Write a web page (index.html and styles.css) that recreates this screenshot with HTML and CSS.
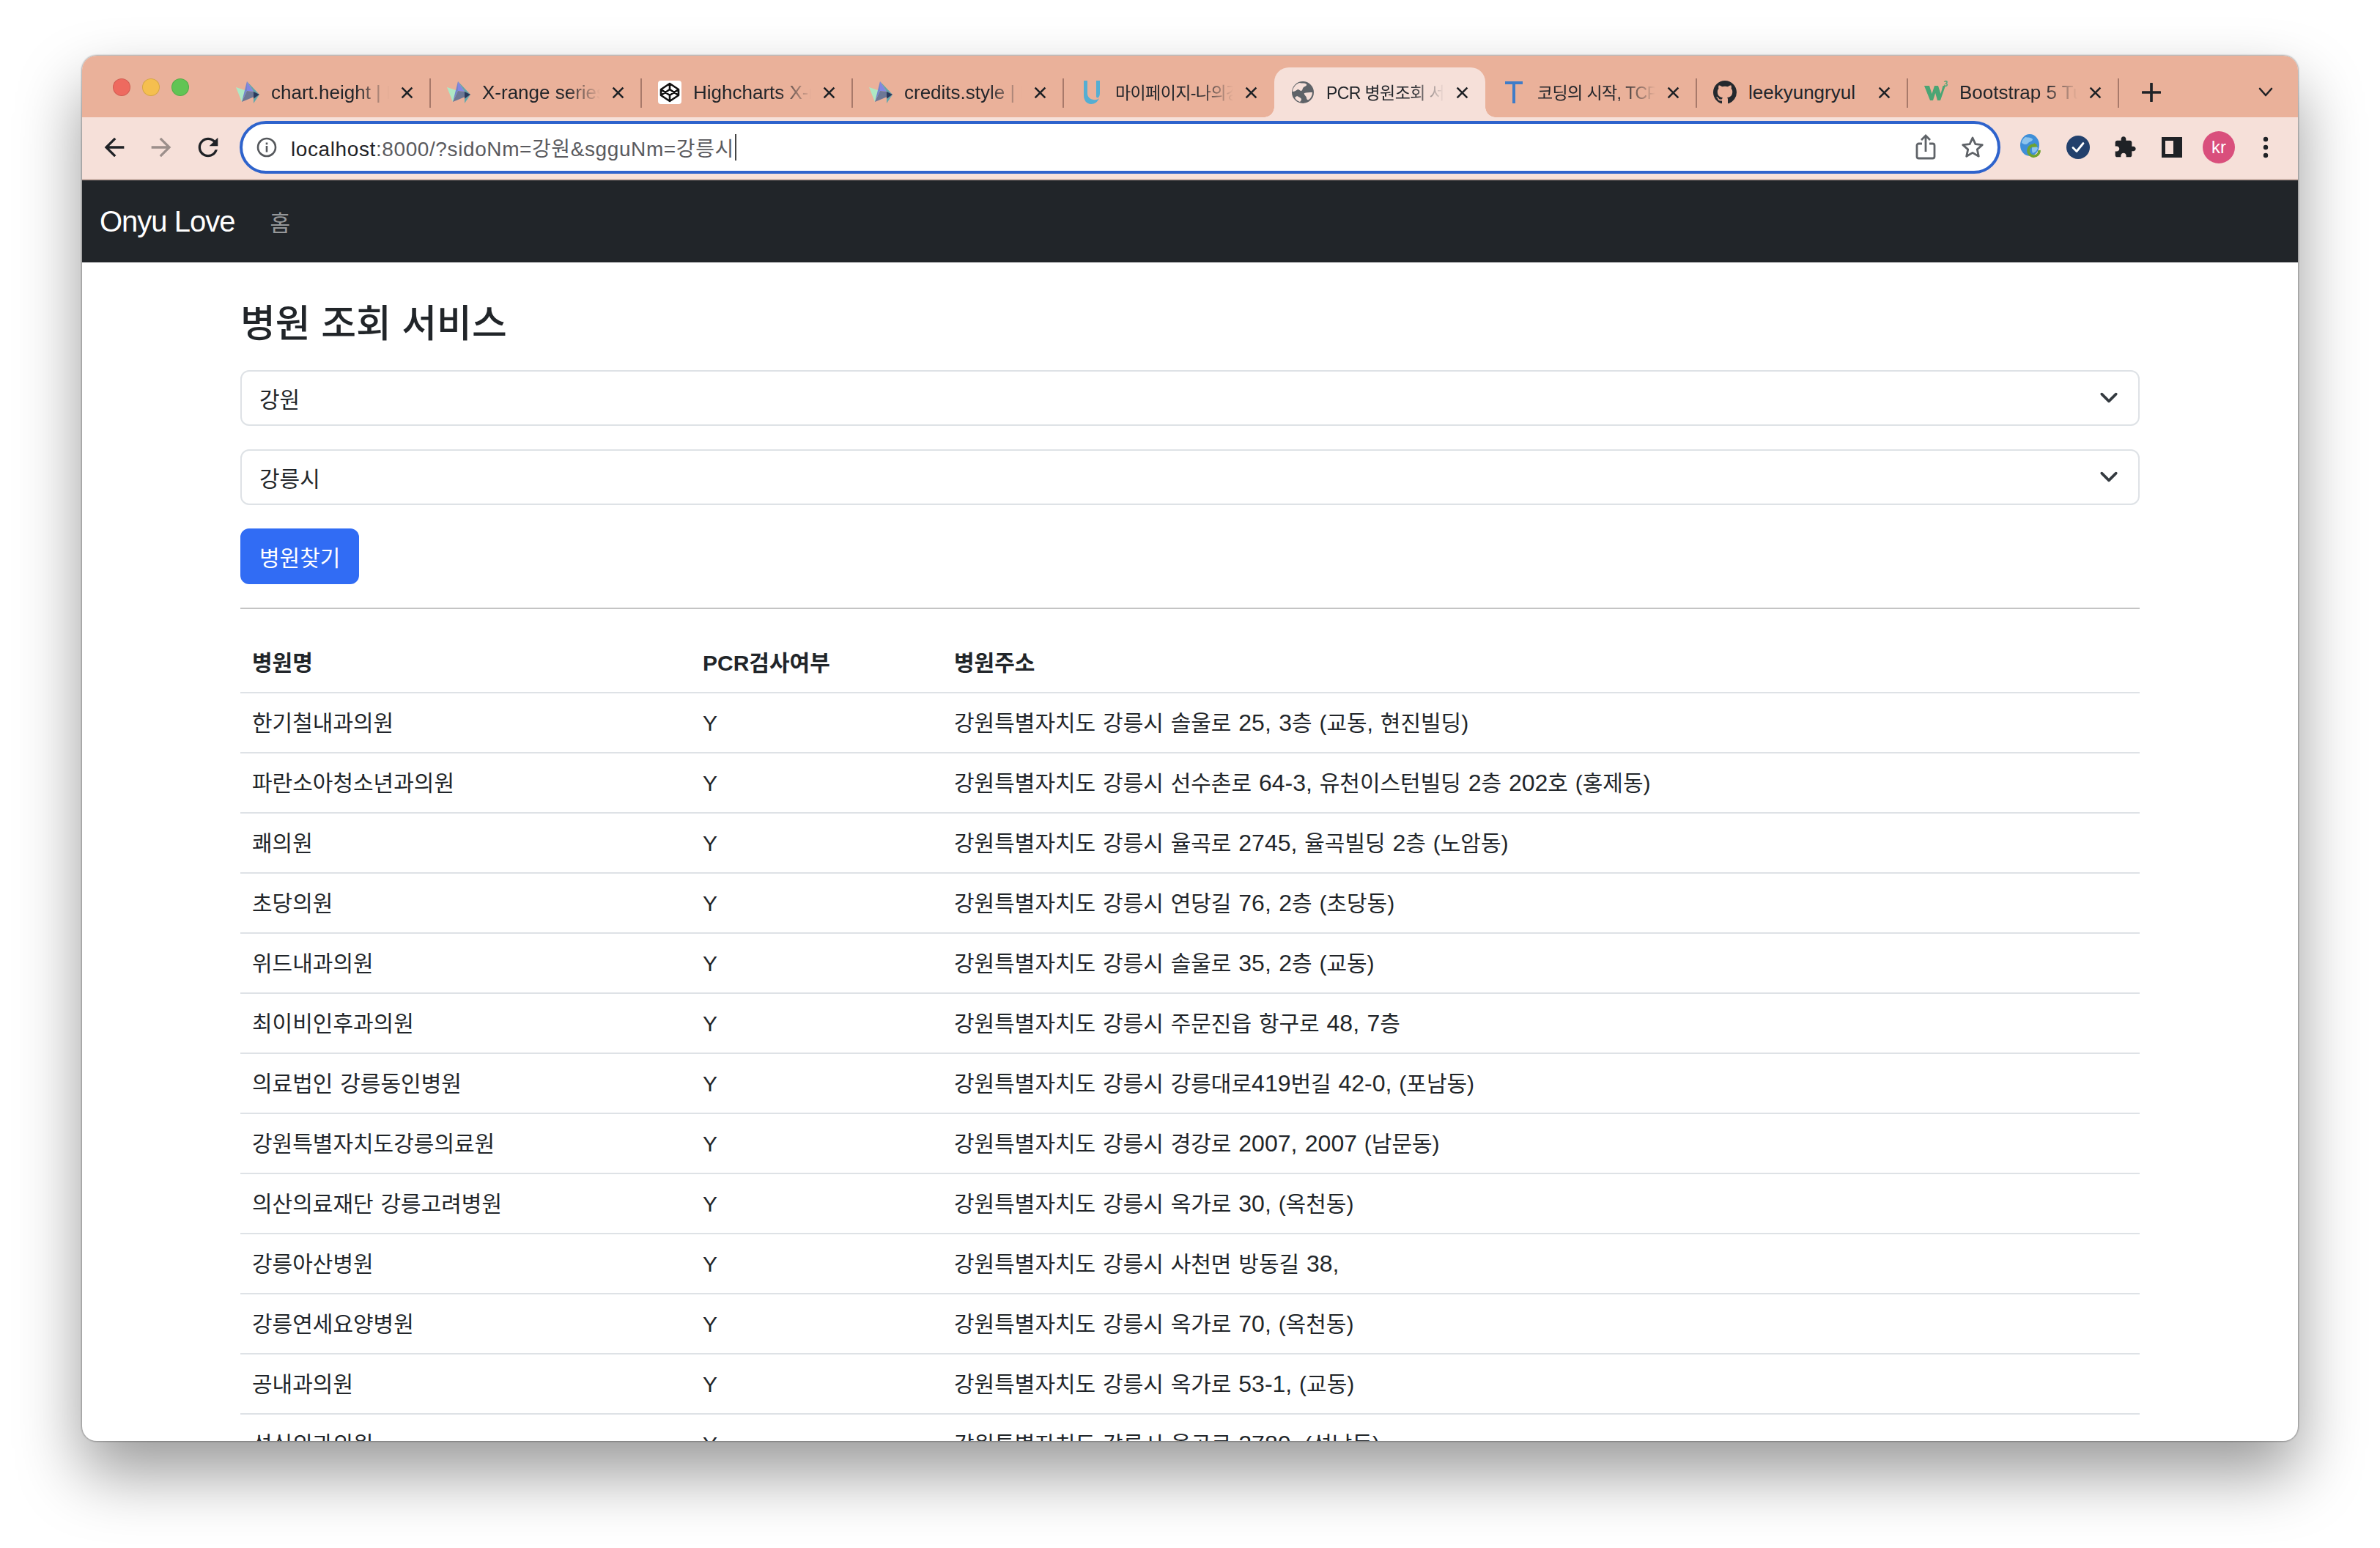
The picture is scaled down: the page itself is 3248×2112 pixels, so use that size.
FILE: index.html
```html
<!DOCTYPE html>
<html lang="ko">
<head>
<meta charset="utf-8">
<title>PCR 병원조회 서비스</title>
<link rel="stylesheet" href="styles.css">
</head>
<body>
<svg class="defs" width="0" height="0" aria-hidden="true">
  <defs>
    <symbol id="i-hc" viewBox="0 0 32 30">
      <polygon points="0,8 8,28 15,13" fill="#aee8c4"/>
      <polygon points="15,0 8,28 15,13" fill="#7585cc"/>
      <polygon points="15,0 24,14 15,13" fill="#8286e2"/>
      <polygon points="15,13 24,14 32,18 8,28" fill="#6d7896"/>
      <polygon points="15,0 32,18 24,14" fill="#62a4aa"/>
      <polygon points="24,14 32,18 24,24" fill="#2a3a5c"/>
      <polygon points="24,24 32,18 24,30" fill="#62a8ae"/>
    </symbol>
    <symbol id="i-x" viewBox="0 0 16 16">
      <path d="M1.5 1.5l13 13M14.5 1.5l-13 13" fill="none" stroke="#1f2226" stroke-width="2.4"/>
    </symbol>
    <symbol id="i-chev" viewBox="0 0 24 24">
      <path d="M3 7l9 9 9-9" fill="none" stroke="#343a40" stroke-width="3.4" stroke-linecap="round" stroke-linejoin="round"/>
    </symbol>
  </defs>
</svg>

<div class="window">
  <header class="strip">
    <div class="lights"><span class="dot dot-red"></span><span class="dot dot-yellow"></span><span class="dot dot-green"></span></div>
    <div class="tabs">
      <div class="tab">
        <svg class="fav"><use href="#i-hc"/></svg>
        <span class="title">chart.height | Highcharts</span>
        <svg class="close"><use href="#i-x"/></svg>
      </div>
      <div class="tab">
        <svg class="fav"><use href="#i-hc"/></svg>
        <span class="title">X-range series | Highcharts</span>
        <svg class="close"><use href="#i-x"/></svg>
      </div>
      <div class="tab">
        <svg class="fav" viewBox="0 0 32 32">
          <rect width="32" height="32" rx="4" fill="#fff"/>
          <path d="M16 4l12 8v8l-12 8-12-8v-8zM16 4v8M16 20v8M4 12l12 8 12-8M4 20l12-8 12 8" fill="none" stroke="#111" stroke-width="2.6" stroke-linejoin="round"/>
        </svg>
        <span class="title">Highcharts X-range</span>
        <svg class="close"><use href="#i-x"/></svg>
      </div>
      <div class="tab">
        <svg class="fav"><use href="#i-hc"/></svg>
        <span class="title">credits.style | Highcharts</span>
        <svg class="close"><use href="#i-x"/></svg>
      </div>
      <div class="tab tab-before-active">
        <svg class="fav" viewBox="0 0 32 32">
          <path d="M5 0h5v17c0 5 3 8 8 9 3 .6 6 0 8-2-2 5-6 8-11 8C9 32 5 27 5 20zM22 0h5v17c0 3-1 5-2 6-2 1-3 0-3-2z" fill="#55aed2"/>
        </svg>
        <span class="title ko">마이페이지-나의강의실</span>
        <svg class="close"><use href="#i-x"/></svg>
      </div>
      <div class="tab tab-active">
        <svg class="fav" viewBox="0 0 32 32">
          <circle cx="16" cy="16" r="15" fill="#5f6368"/>
          <path d="M11 3c3 1 8 0 10 2 1 2-2 3-4 4-2 2-1 4-3 5-2 0-3-2-5-2-2 1-4 3-7 3 0-5 4-10 9-12zM18 17c3-1 7-1 11-1 0 4-2 8-5 10-2 1-3-1-3-3-1-2-4-4-3-6zM8 21c2 1 5 2 6 4 0 2-1 3-2 4-3-1-6-3-7-6z" fill="#f6e0d9"/>
        </svg>
        <span class="title ko">PCR 병원조회 서비스</span>
        <svg class="close"><use href="#i-x"/></svg>
      </div>
      <div class="tab">
        <svg class="fav" viewBox="0 0 32 32">
          <path d="M4 1h24v4H18v26h-4V5H4z" fill="#3f7cc8"/>
        </svg>
        <span class="title ko">코딩의 시작, TCP School</span>
        <svg class="close"><use href="#i-x"/></svg>
      </div>
      <div class="tab">
        <svg class="fav" viewBox="0 0 16 16">
          <path fill="#24292e" d="M8 0C3.58 0 0 3.58 0 8c0 3.54 2.29 6.53 5.47 7.59.4.07.55-.17.55-.38 0-.19-.01-.82-.01-1.49-2.01.37-2.53-.49-2.69-.94-.09-.23-.48-.94-.82-1.13-.28-.15-.68-.52-.01-.53.63-.01 1.08.58 1.23.82.72 1.21 1.87.87 2.33.66.07-.52.28-.87.51-1.07-1.78-.2-3.64-.89-3.64-3.95 0-.87.31-1.59.82-2.15-.08-.2-.36-1.02.08-2.12 0 0 .67-.21 2.2.82.64-.18 1.32-.27 2-.27.68 0 1.36.09 2 .27 1.53-1.04 2.2-.82 2.2-.82.44 1.1.16 1.92.08 2.12.51.56.82 1.27.82 2.15 0 3.07-1.87 3.75-3.65 3.95.29.25.54.73.54 1.48 0 1.07-.01 1.93-.01 2.2 0 .21.15.46.55.38A8.013 8.013 0 0016 8c0-4.42-3.58-8-8-8z"/>
        </svg>
        <span class="title title-full">leekyungryul</span>
        <svg class="close"><use href="#i-x"/></svg>
      </div>
      <div class="tab">
        <svg class="fav" viewBox="0 0 32 32">
          <path d="M0 7h7l3.500 11L14 7h5l3.500 11L25.500 7H29l-7 20h-4l-2.800-10-3.200 10H8z" fill="#4aa574"/>
          <text x="26.500" y="8" class="w3-sup">3</text>
        </svg>
        <span class="title">Bootstrap 5 Tutorial</span>
        <svg class="close"><use href="#i-x"/></svg>
      </div>
    </div>
    <svg class="plus" viewBox="0 0 24 24"><path d="M12 1v22M1 12h22" stroke="#1f2226" stroke-width="3.4" stroke-linecap="round"/></svg>
    <svg class="tabs-menu" viewBox="0 0 20 14"><path d="M2 2l8 9 8-9" fill="none" stroke="#1f2226" stroke-width="2.6" stroke-linecap="round" stroke-linejoin="round"/></svg>
  </header>

  <div class="toolbar">
    <svg class="tool" viewBox="0 0 24 24"><path d="M20 11H7.830l5.590-5.590L12 4l-8 8 8 8 1.410-1.410L7.830 13H20v-2z" fill="#1f2226"/></svg>
    <svg class="tool" viewBox="0 0 24 24"><path d="M4 11h12.170l-5.590-5.590L12 4l8 8-8 8-1.410-1.410L16.170 13H4v-2z" fill="#9c8f8b"/></svg>
    <svg class="tool" viewBox="0 0 24 24"><path d="M17.650 6.350A7.958 7.958 0 0012 4c-4.420 0-7.990 3.580-7.990 8s3.570 8 7.990 8c3.730 0 6.840-2.550 7.730-6h-2.080A5.990 5.990 0 0112 18c-3.310 0-6-2.690-6-6s2.690-6 6-6c1.660 0 3.140.69 4.220 1.780L13 11h7V4l-2.350 2.350z" fill="#1f2226"/></svg>
    <div class="url">
      <svg class="url-info" viewBox="0 0 28 28">
        <circle cx="14" cy="14" r="12" fill="none" stroke="#55585c" stroke-width="2.6"/>
        <rect x="12.7" y="12" width="2.6" height="8.5" fill="#55585c"/>
        <rect x="12.7" y="7.5" width="2.6" height="2.8" fill="#55585c"/>
      </svg>
      <span class="url-text"><span class="url-host">localhost</span>:8000/?sidoNm=강원&amp;sgguNm=강릉시</span>
      <span class="caret"></span>
      <svg class="url-icon url-share" viewBox="0 0 28 36">
        <path d="M9 13H4.500C3 13 2 14 2 15.500v15C2 32 3 33 4.500 33h19c1.500 0 2.500-1 2.500-2.500v-15C26 14 25 13 23.500 13H19M14 24V3M8 8l6-6 6 6" fill="none" stroke="#5f6368" stroke-width="2.8"/>
      </svg>
      <svg class="url-icon" viewBox="0 0 32 32">
        <path d="M16 3l3.900 8.600 9.400 1-7 6.300 2 9.300-8.300-4.800-8.300 4.800 2-9.300-7-6.300 9.400-1z" fill="none" stroke="#5f6368" stroke-width="2.8" stroke-linejoin="round"/>
      </svg>
    </div>
    <div class="ext-group">
      <svg class="tool" viewBox="0 0 40 40">
        <ellipse cx="18" cy="17" rx="13" ry="15" fill="#3f8fd8"/>
        <path d="M12 6c4 1 8 0 10 3 0 3-5 3-7 6-2 2-5 1-8-1 0-3 2-6 5-8zM22 19c3-1 6 0 7 2-1 4-4 6-7 7-1-3-2-6 0-9z" fill="#8dc4ec"/>
        <path d="M31 24a7.500 7.500 0 11-4-6" fill="none" stroke="#6fa32f" stroke-width="3.600"/>
        <path d="M24 14l5 5-7 1z" fill="#6fa32f"/>
      </svg>
      <svg class="tool" viewBox="0 0 40 40">
        <circle cx="20" cy="20" r="16" fill="#22406c"/>
        <path d="M13 20.500l5 5 9-11" fill="none" stroke="#fff" stroke-width="2.800" stroke-linecap="round" stroke-linejoin="round"/>
      </svg>
      <svg class="tool" viewBox="-3 -3 30 30">
        <path d="M20.500 11H19V7c0-1.100-.9-2-2-2h-4V3.500C13 2.120 11.880 1 10.500 1S8 2.120 8 3.500V5H4c-1.100 0-1.990.9-1.990 2v3.800H3.500c1.490 0 2.700 1.210 2.700 2.700s-1.210 2.700-2.700 2.700H2V20c0 1.100.9 2 2 2h3.800v-1.500c0-1.490 1.210-2.700 2.700-2.700 1.490 0 2.700 1.210 2.700 2.700V22H17c1.100 0 2-.9 2-2v-4h1.500c1.380 0 2.500-1.120 2.500-2.500S21.880 11 20.500 11z" fill="#1f2226"/>
      </svg>
      <svg class="tool" viewBox="0 0 40 40">
        <rect x="6" y="6" width="28" height="28" fill="#1f2226"/>
        <rect x="11" y="11" width="11" height="18" fill="#f6e0d9"/>
      </svg>
      <div class="avatar">kr</div>
      <svg class="tool" viewBox="0 0 40 40">
        <circle cx="20" cy="9" r="3.200" fill="#1f2226"/>
        <circle cx="20" cy="20" r="3.200" fill="#1f2226"/>
        <circle cx="20" cy="31" r="3.200" fill="#1f2226"/>
      </svg>
    </div>
  </div>

  <div class="viewport">
    <nav class="navbar">
      <a class="brand">Onyu Love</a>
      <a class="nav-link">홈</a>
    </nav>
    <main class="container">
      <h1 class="page-title">병원 조회 서비스</h1>
      <div class="select"><span>강원</span><svg class="select-chev"><use href="#i-chev"/></svg></div>
      <div class="select"><span>강릉시</span><svg class="select-chev"><use href="#i-chev"/></svg></div>
      <button class="btn" type="button">병원찾기</button>
      <hr class="divider">
      <table class="table">
        <colgroup><col class="col-name"><col class="col-pcr"><col class="col-addr"></colgroup>
        <thead>
          <tr><th>병원명</th><th>PCR검사여부</th><th>병원주소</th></tr>
        </thead>
        <tbody>
          <tr><td>한기철내과의원</td><td>Y</td><td>강원특별자치도 강릉시 솔울로 <span class="num">25, 3</span>층 (교동, 현진빌딩)</td></tr>
          <tr><td>파란소아청소년과의원</td><td>Y</td><td>강원특별자치도 강릉시 선수촌로 <span class="num">64-3,</span> 유천이스턴빌딩 <span class="num">2</span>층 <span class="num">202</span>호 (홍제동)</td></tr>
          <tr><td>쾌의원</td><td>Y</td><td>강원특별자치도 강릉시 율곡로 <span class="num">2745,</span> 율곡빌딩 <span class="num">2</span>층 (노암동)</td></tr>
          <tr><td>초당의원</td><td>Y</td><td>강원특별자치도 강릉시 연당길 <span class="num">76, 2</span>층 (초당동)</td></tr>
          <tr><td>위드내과의원</td><td>Y</td><td>강원특별자치도 강릉시 솔울로 <span class="num">35, 2</span>층 (교동)</td></tr>
          <tr><td>최이비인후과의원</td><td>Y</td><td>강원특별자치도 강릉시 주문진읍 항구로 <span class="num">48, 7</span>층</td></tr>
          <tr><td>의료법인 강릉동인병원</td><td>Y</td><td>강원특별자치도 강릉시 강릉대로<span class="num">419</span>번길 <span class="num">42-0,</span> (포남동)</td></tr>
          <tr><td>강원특별자치도강릉의료원</td><td>Y</td><td>강원특별자치도 강릉시 경강로 <span class="num">2007, 2007</span> (남문동)</td></tr>
          <tr><td>의산의료재단 강릉고려병원</td><td>Y</td><td>강원특별자치도 강릉시 옥가로 <span class="num">30,</span> (옥천동)</td></tr>
          <tr><td>강릉아산병원</td><td>Y</td><td>강원특별자치도 강릉시 사천면 방동길 <span class="num">38,</span></td></tr>
          <tr><td>강릉연세요양병원</td><td>Y</td><td>강원특별자치도 강릉시 옥가로 <span class="num">70,</span> (옥천동)</td></tr>
          <tr><td>공내과의원</td><td>Y</td><td>강원특별자치도 강릉시 옥가로 <span class="num">53-1,</span> (교동)</td></tr>
          <tr><td>성심외과의원</td><td>Y</td><td>강원특별자치도 강릉시 율곡로 <span class="num">2780,</span> (성남동)</td></tr>
        </tbody>
      </table>
    </main>
  </div>
</div>
</body>
</html>
```

FILE: styles.css
```css
* { box-sizing: border-box; }

html, body { height: 100%; }

body {
  margin: 0;
  padding: 76px 112px 146px;
  background: #fff;
  overflow: hidden;
  color: #212529;
  font-family: "Liberation Sans", "Noto Sans CJK KR", sans-serif;
}

.defs { position: absolute; }

.window {
  height: 100%;
  display: flex;
  flex-direction: column;
  border-radius: 20px;
  overflow: hidden;
  background: #fff;
  box-shadow: 0 44px 88px rgba(0, 0, 0, .4), 0 0 2px 1px rgba(0, 0, 0, .3);
}

/* tab strip */
.strip {
  flex: none;
  height: 84px;
  background: #eab19a;
  display: flex;
  align-items: flex-end;
}

.lights {
  align-self: flex-start;
  display: flex;
  gap: 16px;
  margin: 31px 41px 0 42px;
}

.dot { width: 24px; height: 24px; border-radius: 50%; border: 1px solid rgba(0, 0, 0, .12); }
.dot-red { background: #ee6a5f; }
.dot-yellow { background: #f5bf4f; }
.dot-green { background: #61c454; }

.tabs { display: flex; height: 68px; }

.tab {
  position: relative;
  width: 288px;
  height: 68px;
  display: flex;
  align-items: center;
  padding-left: 23px;
}

.tab::after {
  content: "";
  position: absolute;
  right: -1px;
  top: 15px;
  width: 2px;
  height: 40px;
  background: #a8796a;
}

.tab-before-active::after { display: none; }

.tab-active {
  background: #f6e0d9;
  border-radius: 20px 20px 0 0;
}

.tab-active::before, .tab-active::after {
  content: "";
  position: absolute;
  top: auto;
  bottom: 0;
  width: 14px;
  height: 14px;
}

.tab-active::before {
  left: -14px;
  background: radial-gradient(circle at 0 0, transparent 13.5px, #f6e0d9 14px);
}

.tab-active::after {
  right: -14px;
  background: radial-gradient(circle at 100% 0, transparent 13.5px, #f6e0d9 14px);
}

.fav { flex: none; width: 32px; height: 32px; }

.w3-sup { font-size: 10px; fill: #4aa574; font-weight: 700; font-family: "Liberation Sans", sans-serif; }

.title {
  flex: none;
  width: 161px;
  margin-left: 16px;
  font-size: 26px;
  color: #22252a;
  white-space: nowrap;
  overflow: hidden;
  -webkit-mask-image: linear-gradient(to right, #000 72%, transparent 100%);
  mask-image: linear-gradient(to right, #000 72%, transparent 100%);
}

.title.ko { font-size: 23px; letter-spacing: -.6px; padding-bottom: 3px; }
.title-full { -webkit-mask-image: none; mask-image: none; }

.close { flex: none; width: 17px; height: 17px; margin-left: 16px; }

.plus { flex: none; width: 26px; height: 26px; margin: 0 0 21px 32px; }
.tabs-menu { flex: none; width: 20px; height: 14px; margin: 0 34px 27px auto; }

/* toolbar */
.toolbar {
  flex: none;
  height: 86px;
  padding: 0 24px 2px;
  background: #f6e0d9;
  border-bottom: 2px solid #c9b0a7;
  display: flex;
  align-items: center;
  gap: 24px;
}

.tool { flex: none; width: 40px; height: 40px; }

.url {
  flex: 1;
  height: 72px;
  margin-left: -1px;
  margin-right: -2px;
  border: 4px solid #2e63cc;
  border-radius: 36px;
  background: #fff;
  display: flex;
  align-items: center;
  padding: 0 18px 0 19px;
}

.url-info { flex: none; width: 28px; height: 28px; margin-right: 19px; }

.url-text {
  font-size: 28px;
  letter-spacing: .6px;
  color: #5a5a5e;
  white-space: nowrap;
}

.url-host { color: #1f2226; }

.caret { width: 2px; height: 36px; background: #444; margin-left: 1px; }

.url-icon { flex: none; width: 32px; height: 36px; margin-left: 32px; }
.url-share { margin-left: auto; }

.ext-group { display: flex; align-items: center; gap: 24px; }

.avatar {
  flex: none;
  width: 44px;
  height: 44px;
  margin: 0 -2px;
  border-radius: 50%;
  background: #d94f7c;
  color: #fff;
  font-size: 24px;
  display: flex;
  align-items: center;
  justify-content: center;
}

/* page */
.viewport { flex: 1; min-height: 0; overflow: hidden; }

.navbar {
  height: 112px;
  background: #212529;
  display: flex;
  align-items: center;
  padding-left: 24px;
}

.brand { font-size: 40px; letter-spacing: -1px; color: #fff; }
.nav-link { font-size: 30px; color: rgba(255, 255, 255, .55); margin-left: 48px; }

.container { margin: 0 216px; padding-top: 51px; }

.page-title {
  margin: 0 0 29px;
  font-size: 52px;
  line-height: 67px;
  font-weight: 500;
}

.select {
  height: 76px;
  margin-bottom: 32px;
  padding: 0 27px 0 24px;
  border: 2px solid #dee2e6;
  border-radius: 12px;
  font-size: 30px;
  display: flex;
  align-items: center;
  justify-content: space-between;
}

.select-chev { width: 26px; height: 26px; }

.btn {
  display: block;
  height: 76px;
  padding: 0 24px;
  border: 2px solid #316cf4;
  border-radius: 12px;
  background: #316cf4;
  color: #fff;
  font: inherit;
  font-size: 30px;
}

.divider {
  height: 2px;
  margin: 32px 0;
  border: 0;
  background: #c4c4c4;
}

.table {
  width: 100%;
  table-layout: fixed;
  border-collapse: separate;
  border-spacing: 0;
  font-size: 30px;
  word-spacing: 1.5px;
}

.col-name { width: 615px; }
.col-pcr { width: 343px; }

.table th, .table td {
  padding: 17px 16px 15px;
  line-height: 48px;
  text-align: left;
  white-space: nowrap;
  border-bottom: 2px solid #dee2e6;
}

.table th { padding-top: 18px; font-weight: 700; }

.num { font-size: 32px; line-height: 0; }
```
